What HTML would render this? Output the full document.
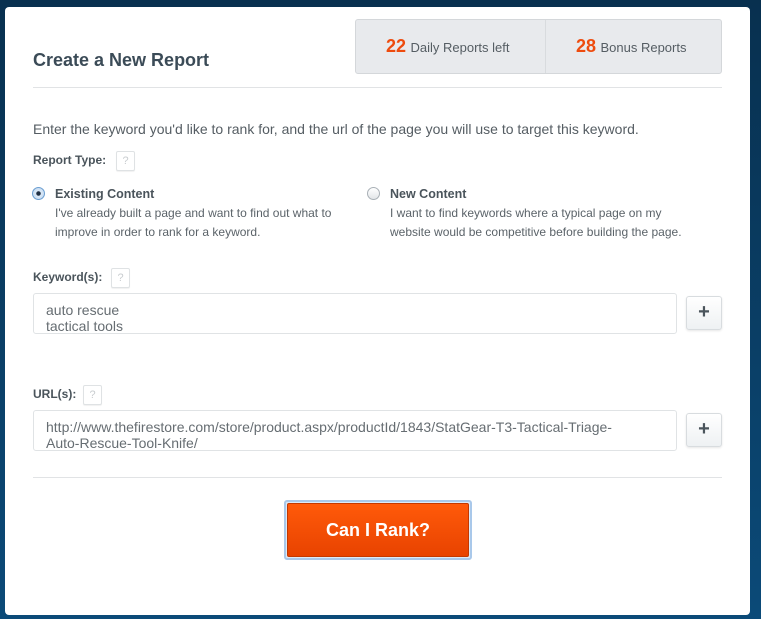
<!DOCTYPE html>
<html><head><meta charset="utf-8"><style>
*{margin:0;padding:0;box-sizing:border-box}
body{width:761px;height:619px;overflow:hidden;background:linear-gradient(#08304f,#0b4a78);font-family:"Liberation Sans",sans-serif;position:relative}
.panel{position:absolute;left:5px;top:7px;width:745px;height:608px;background:#fff;border-radius:4px}
.a{position:absolute;white-space:nowrap}
h1{position:absolute;left:33px;top:50px;font-size:18px;font-weight:bold;color:#3b4b57}
.stats{position:absolute;left:355px;top:19px;width:367px;height:55px;background:#e8eaed;border:1px solid #d4d7da;border-radius:3px}
.stats .d{position:absolute;left:189px;top:0;width:1px;height:53px;background:#d8dbde}
.stats span.n{color:#ee4b0e;font-weight:bold;font-size:18px}
.stats span.t{color:#555d63;font-size:13px}
.hr{position:absolute;left:33px;width:689px;height:1px;background:#e1e3e5}
.lbl{font-size:12px;font-weight:bold;color:#4a545b}
.q{position:absolute;width:19px;height:20px;border:1px solid #dfe2e4;border-radius:2px;background:#fff;color:#c9cdd0;font-size:11px;text-align:center;line-height:18px;box-shadow:0 1px 1px rgba(0,0,0,.06)}
.radio{position:absolute;width:13px;height:13px;border-radius:50%;border:1px solid #a9b0b6;background:linear-gradient(#fff,#e2e5e8)}
.radio.on{border-color:#6b9ed1;background:radial-gradient(circle,#1f2f44 0 2px,#dbe9f7 2.5px,#bcd4ee 100%)}
.ot{font-size:12.5px;font-weight:bold;color:#4a545b}
.desc{font-size:12px;color:#5b6369;line-height:19px}
.ta{position:absolute;left:33px;width:644px;height:41px;border:1px solid #e0e3e5;border-radius:3px;background:#fff;font-size:14px;color:#666d72;padding:8px 12px;line-height:16px}
.plus{position:absolute;left:686px;width:36px;height:34px;border:1px solid #d8dcdf;border-radius:3px;background:linear-gradient(#fff,#eef1f3);color:#4b555c;font-weight:bold;font-size:20px;text-align:center;line-height:31px;box-shadow:0 1px 2px rgba(0,0,0,.1)}
.btn{position:absolute;left:284px;top:500px;width:188px;height:60px;border:2px solid #a9c8ea;border-radius:3px;background:#dde9f6;padding:1px}
.btn div{width:100%;height:100%;background:linear-gradient(#ff5a0a,#e84300);border:1px solid #c43800;border-radius:2px;color:#fff;font-weight:bold;font-size:18px;text-align:center;line-height:52px}
</style></head><body>
<div class="panel"></div>
<h1>Create a New Report</h1>
<div class="stats"><div class="d"></div>
<div class="a" style="left:30px;top:16px"><span class="n">22</span> <span class="t">Daily Reports left</span></div>
<div class="a" style="left:220px;top:16px"><span class="n">28</span> <span class="t">Bonus Reports</span></div>
</div>
<div class="hr" style="top:87px"></div>
<div class="a" style="left:33px;top:121px;font-size:14px;color:#555d63">Enter the keyword you'd like to rank for, and the url of the page you will use to target this keyword.</div>
<div class="a lbl" style="left:33px;top:153px">Report Type:</div>
<div class="q" style="left:116px;top:151px">?</div>
<div class="radio on" style="left:32px;top:187px"></div>
<div class="a ot" style="left:55px;top:187px">Existing Content</div>
<div class="a desc" style="left:55px;top:204px">I've already built a page and want to find out what to<br>improve in order to rank for a keyword.</div>
<div class="radio" style="left:367px;top:187px"></div>
<div class="a ot" style="left:390px;top:187px">New Content</div>
<div class="a desc" style="left:390px;top:204px">I want to find keywords where a typical page on my<br>website would be competitive before building the page.</div>
<div class="a lbl" style="left:33px;top:270px">Keyword(s):</div>
<div class="q" style="left:111px;top:268px">?</div>
<div class="ta" style="top:293px">auto rescue<br>tactical tools</div>
<div class="plus" style="top:296px">+</div>
<div class="a lbl" style="left:33px;top:387px">URL(s):</div>
<div class="q" style="left:83px;top:385px">?</div>
<div class="ta" style="top:410px;font-size:14px">http://www.thefirestore.com/store/product.aspx/productId/1843/StatGear-T3-Tactical-Triage-<br>Auto-Rescue-Tool-Knife/</div>
<div class="plus" style="top:413px">+</div>
<div class="hr" style="top:477px"></div>
<div class="btn"><div>Can I Rank?</div></div>
</body></html>
